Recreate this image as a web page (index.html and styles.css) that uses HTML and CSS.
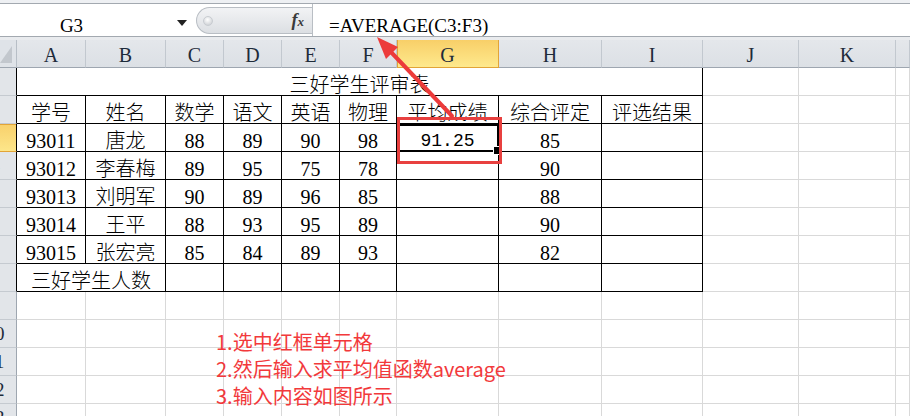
FILE: index.html
```html
<!DOCTYPE html>
<html lang="zh-CN">
<head>
<meta charset="utf-8">
<title>三好学生评审表</title>
<link rel="stylesheet" href="styles.css">
</head>
<body>
<div class="app">
  <div class="topstrip"></div>
  <div class="fbar">
    <div class="namebox"><span class="nb-text">G3</span><span class="nb-arrow"></span></div>
    <div class="pill"><span class="knob"></span><span class="fx"><i>f</i><i class="fx-x">x</i></span></div>
    <div class="formula">=AVERAGE(C3:F3)</div>
  </div>
  <div class="gap"></div>
  <div class="sheet">
    <div class="corner"><span class="tri"></span></div>
    <div class="ch">A</div><div class="ch">B</div><div class="ch">C</div><div class="ch">D</div><div class="ch">E</div><div class="ch">F</div><div class="ch sel">G</div><div class="ch">H</div><div class="ch">I</div><div class="ch">J</div><div class="ch">K</div><div class="ch"></div>

    <div class="rh tb"><span>1</span></div>
    <div class="c t span9">三好学生评审表</div>
    <div class="c"></div><div class="c"></div><div class="c"></div>

    <div class="rh tb"><span>2</span></div>
    <div class="c t">学号</div><div class="c t">姓名</div><div class="c t">数学</div><div class="c t">语文</div><div class="c t">英语</div><div class="c t">物理</div><div class="c t">平均成绩</div><div class="c t">综合评定</div><div class="c t">评选结果</div>
    <div class="c"></div><div class="c"></div><div class="c"></div>

    <div class="rh tb sel"><span>3</span></div>
    <div class="c t">93011</div><div class="c t">唐龙</div><div class="c t">88</div><div class="c t">89</div><div class="c t">90</div><div class="c t">98</div><div class="c t mono active">91.25</div><div class="c t">85</div><div class="c t"></div>
    <div class="c"></div><div class="c"></div><div class="c"></div>

    <div class="rh tb"><span>4</span></div>
    <div class="c t">93012</div><div class="c t">李春梅</div><div class="c t">89</div><div class="c t">95</div><div class="c t">75</div><div class="c t">78</div><div class="c t"></div><div class="c t">90</div><div class="c t"></div>
    <div class="c"></div><div class="c"></div><div class="c"></div>

    <div class="rh tb"><span>5</span></div>
    <div class="c t">93013</div><div class="c t">刘明军</div><div class="c t">90</div><div class="c t">89</div><div class="c t">96</div><div class="c t">85</div><div class="c t"></div><div class="c t">88</div><div class="c t"></div>
    <div class="c"></div><div class="c"></div><div class="c"></div>

    <div class="rh tb"><span>6</span></div>
    <div class="c t">93014</div><div class="c t">王平</div><div class="c t">88</div><div class="c t">93</div><div class="c t">95</div><div class="c t">89</div><div class="c t"></div><div class="c t">90</div><div class="c t"></div>
    <div class="c"></div><div class="c"></div><div class="c"></div>

    <div class="rh tb"><span>7</span></div>
    <div class="c t">93015</div><div class="c t">张宏亮</div><div class="c t">85</div><div class="c t">84</div><div class="c t">89</div><div class="c t">93</div><div class="c t"></div><div class="c t">82</div><div class="c t"></div>
    <div class="c"></div><div class="c"></div><div class="c"></div>

    <div class="rh tb"><span>8</span></div>
    <div class="c t span2">三好学生人数</div><div class="c t"></div><div class="c t"></div><div class="c t"></div><div class="c t"></div><div class="c t"></div><div class="c t"></div><div class="c t"></div>
    <div class="c"></div><div class="c"></div><div class="c"></div>

    <div class="rh"><span>9</span></div>
    <div class="c"></div><div class="c"></div><div class="c"></div><div class="c"></div><div class="c"></div><div class="c"></div><div class="c"></div><div class="c"></div><div class="c"></div><div class="c"></div><div class="c"></div><div class="c"></div>

    <div class="rh"><span>10</span></div>
    <div class="c"></div><div class="c"></div><div class="c"></div><div class="c"></div><div class="c"></div><div class="c"></div><div class="c"></div><div class="c"></div><div class="c"></div><div class="c"></div><div class="c"></div><div class="c"></div>

    <div class="rh"><span>11</span></div>
    <div class="c"></div><div class="c"></div><div class="c"></div><div class="c"></div><div class="c"></div><div class="c"></div><div class="c"></div><div class="c"></div><div class="c"></div><div class="c"></div><div class="c"></div><div class="c"></div>

    <div class="rh"><span>12</span></div>
    <div class="c"></div><div class="c"></div><div class="c"></div><div class="c"></div><div class="c"></div><div class="c"></div><div class="c"></div><div class="c"></div><div class="c"></div><div class="c"></div><div class="c"></div><div class="c"></div>

    <div class="rh"><span>13</span></div>
    <div class="c"></div><div class="c"></div><div class="c"></div><div class="c"></div><div class="c"></div><div class="c"></div><div class="c"></div><div class="c"></div><div class="c"></div><div class="c"></div><div class="c"></div><div class="c"></div>
  </div>

  <div class="redbox"></div>
  <svg class="arrow" width="910" height="416" viewBox="0 0 910 416">
    <line x1="452" y1="116" x2="389" y2="50" stroke="#ec3b3b" stroke-width="4" stroke-linecap="round"/>
    <polygon points="377,37 398,47 386,59" fill="#ec3b3b"/>
  </svg>
  <div class="note">
    <div>1.选中红框单元格</div>
    <div>2.然后输入求平均值函数average</div>
    <div>3.输入内容如图所示</div>
  </div>
</div>
</body>
</html>
```

FILE: styles.css
```css
* { box-sizing: border-box; margin: 0; padding: 0; }
html, body { width: 910px; height: 416px; overflow: hidden; background: #fff; }
body { font-family: "Liberation Serif", "Noto Sans CJK SC", serif; color: #000; }

.app { position: relative; width: 910px; height: 416px; overflow: hidden; display: flex; flex-direction: column; }

.topstrip { flex: none; height: 4px; background: #eef0f3; border-bottom: 1px solid #a3a9b0; }

.fbar { flex: none; height: 33px; display: flex; align-items: flex-start; background: #fff; border-bottom: 1px solid #a3a9b0; }
.namebox { width: 196px; height: 32px; display: flex; align-items: flex-start; }
.nb-text { width: 143px; text-align: center; font-size: 19px; line-height: 19px; padding-top: 12px; }
.nb-arrow { margin-left: 34px; margin-top: 16px; width: 0; height: 0; border-left: 5px solid transparent; border-right: 5px solid transparent; border-top: 6px solid #222; }

.pill { width: 116px; height: 27px; margin-top: 3px; display: flex; align-items: center; padding-left: 6px; padding-right: 8px; border: 1px solid #b9bec4; border-right: none; border-radius: 14px 0 0 14px; background: linear-gradient(#f2f3f5, #dcdfe3); }
.knob { width: 10px; height: 10px; border-radius: 50%; background: radial-gradient(circle at 45% 35%, #ffffff, #c3c7cc); border: 1px solid #c8ccd1; }
.fx { margin-left: auto; font-family: "Liberation Serif", serif; font-weight: bold; font-size: 18px; color: #3a3a3a; line-height: 18px; }
.fx-x { font-size: 13px; }

.formula { flex: 1; height: 32px; border-left: 1px solid #b9bec4; padding-left: 16px; padding-top: 12px; font-size: 19px; line-height: 19px; white-space: nowrap; }

.gap { flex: none; height: 3px; background: #e9ebee; }

.sheet { display: grid; grid-template-columns: 17px 69px 80px 58px 58px 58px 57px 102px 103px 101px 96px 97px 14px; grid-auto-rows: 28px; }

.corner { background: #dfe3e8; border-right: 1px solid #b7bec6; border-bottom: 1px solid #9ea6b0; display: flex; align-items: flex-end; justify-content: flex-end; padding: 0 4px 4px 0; }
.tri { width: 0; height: 0; border-left: 12px solid transparent; border-bottom: 17px solid #c2c7cd; }

.ch { background: linear-gradient(#e4e7eb, #dce0e5); border-right: 1px solid #c2c8cf; border-bottom: 1px solid #9ea6b0; display: flex; align-items: center; justify-content: center; font-size: 20px; line-height: 20px; padding-top: 3px; color: #1e2b3a; }
.ch.sel { background: linear-gradient(#f8cf68, #fee98d); border-right-color: #e2a437; border-bottom-color: #e2a437; box-shadow: inset 1px 0 0 #e2a437; }

.rh { background: #e2e5e9; border-right: 1px solid #9ea6b0; border-bottom: 1px solid #c5cad0; overflow: hidden; display: flex; align-items: center; font-size: 19px; line-height: 19px; color: #1e2b3a; }
.rh span { flex: none; width: 40px; margin-left: -25px; text-align: center; }
.rh.tb { border-right-color: #000; }
.rh.sel { background: linear-gradient(#f8d06b, #fde68a); border-bottom-color: #e2a437; box-shadow: inset 0 1px 0 #e2a437; }

.c { border-right: 1px solid #d9d9d9; border-bottom: 1px solid #d9d9d9; display: flex; align-items: center; justify-content: center; font-size: 20px; line-height: 20px; font-weight: 300; padding-top: 7px; white-space: nowrap; }
.t { border-right-color: #000; border-bottom-color: #000; }
.span9 { grid-column: span 9; }
.span2 { grid-column: span 2; }
.mono { font-family: "Liberation Mono", monospace; font-size: 18px; }
.active { position: relative; outline: 2px solid #000; outline-offset: -2px; }
.active::after { content: ""; position: absolute; right: -4px; bottom: -4px; width: 7px; height: 7px; background: #000; border: 1px solid #fff; }

.redbox { position: absolute; left: 397px; top: 117px; width: 105px; height: 47px; border: 3px solid #e8403f; }
.arrow { position: absolute; left: 0; top: 0; pointer-events: none; }
.note { position: absolute; left: 216px; top: 328px; color: #f2393b; font-family: "Noto Sans CJK SC", sans-serif; font-size: 20px; line-height: 27px; white-space: nowrap; }
```
